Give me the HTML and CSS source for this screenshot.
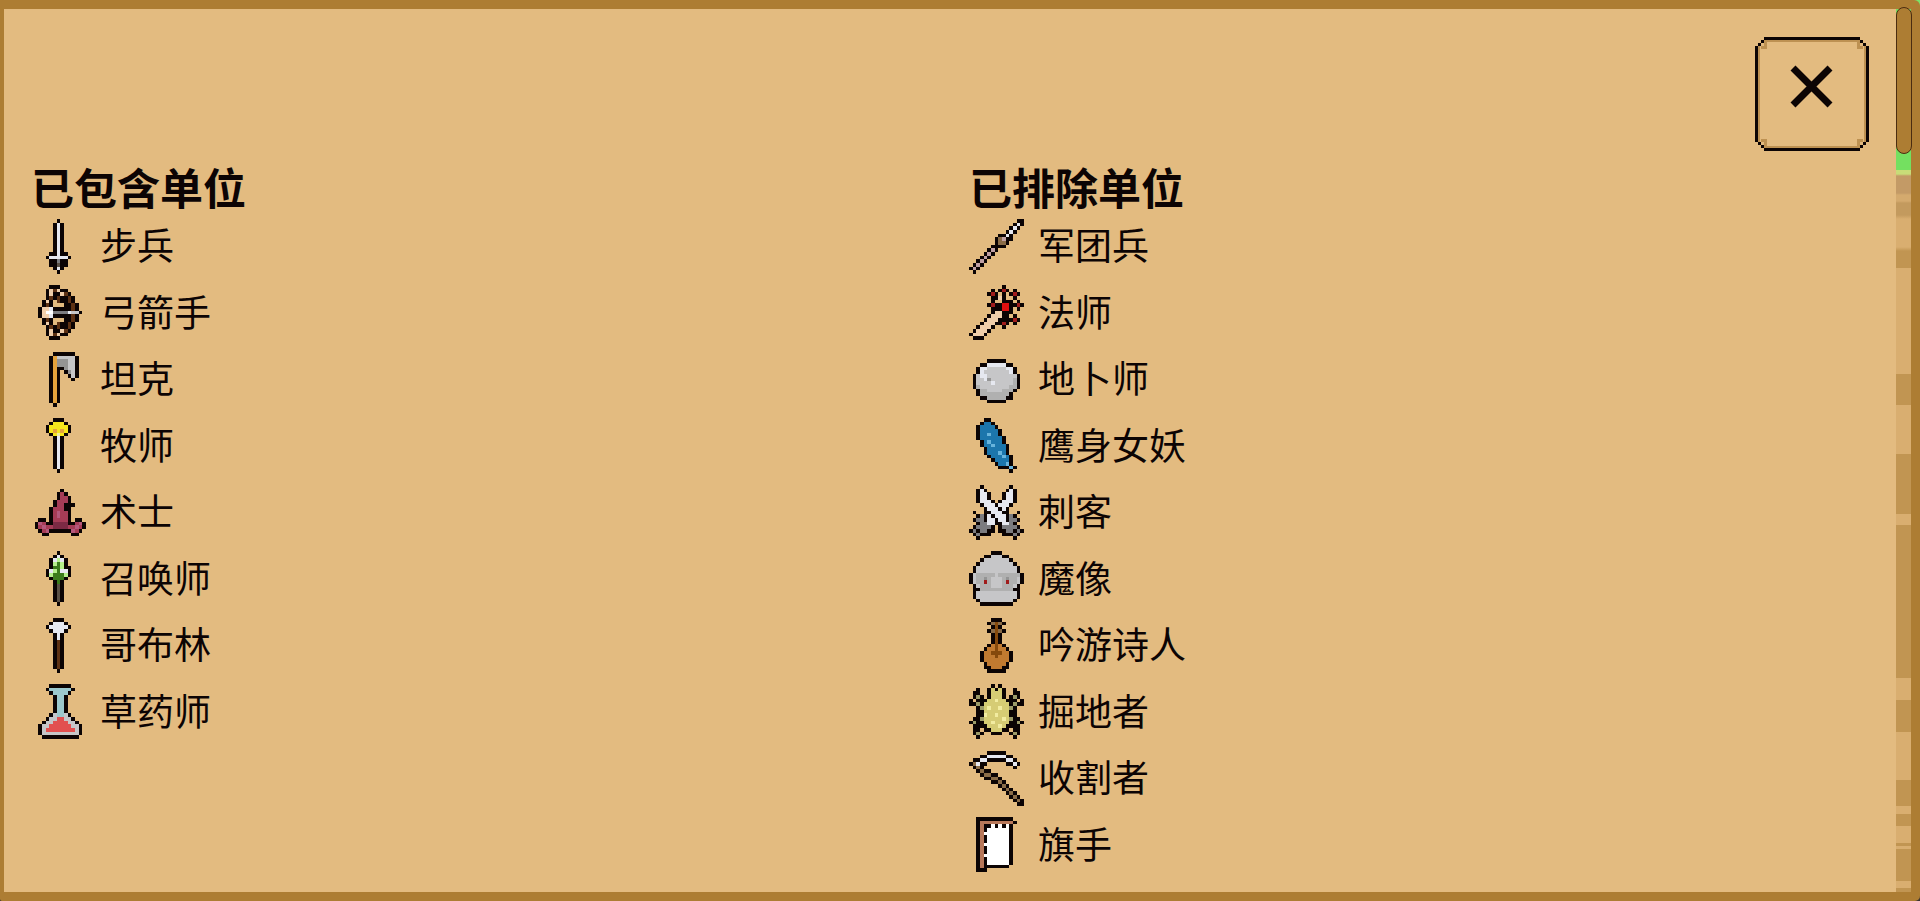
FILE: index.html
```
<!DOCTYPE html>
<html lang="zh-CN">
<head>
    <meta charset="UTF-8">
    <meta name="viewport" content="width=device-width, initial-scale=1.0">
    <title>单位</title>
    <link rel="stylesheet" href="styles.css">
</head>
<body>
    <div class="panel">
        <main class="panel-content">
            <div class="panel-header">
                <button type="button" class="close-btn" aria-label="关闭">
                    <svg class="close-frame" viewBox="0 0 114 114" aria-hidden="true">
                        <path class="frame-shade" d="M9 3h96v2H9zM9 109h96v2H9zM3 9h2v96H3zM109 9h2v96h-2zM9 5h3v4H9zM6 9h6v3H6zM102 5h3v4h-3zM102 9h6v3h-6zM6 102h6v3H6zM9 105h3v4H9zM102 102h6v3h-6zM102 105h3v4h-3z"/>
                        <path class="frame-line" d="M9 0h96v3H9zM9 111h96v3H9zM0 9h3v96H0zM111 9h3v96h-3zM6 3h3v3H6zM3 6h3v3H3zM105 3h3v3h-3zM108 6h3v3h-3zM3 105h3v3H3zM6 108h3v3H6zM108 105h3v3h-3zM105 108h3v3h-3z"/>
                        <path class="frame-cross" d="M38 31l37 37M75 31L38 68"/>
                    </svg>
                </button>
            </div>

            <div class="unit-columns">
                <section class="unit-group">
                    <h2 class="unit-heading">已包含单位</h2>
                    <ul class="unit-list">
                        <li class="unit"><svg class="unit-icon" data-icon="sword"></svg><span class="unit-name">步兵</span></li>
                        <li class="unit"><svg class="unit-icon" data-icon="bow"></svg><span class="unit-name">弓箭手</span></li>
                        <li class="unit"><svg class="unit-icon" data-icon="axe"></svg><span class="unit-name">坦克</span></li>
                        <li class="unit"><svg class="unit-icon" data-icon="wand"></svg><span class="unit-name">牧师</span></li>
                        <li class="unit"><svg class="unit-icon" data-icon="hat"></svg><span class="unit-name">术士</span></li>
                        <li class="unit"><svg class="unit-icon" data-icon="sprout"></svg><span class="unit-name">召唤师</span></li>
                        <li class="unit"><svg class="unit-icon" data-icon="club"></svg><span class="unit-name">哥布林</span></li>
                        <li class="unit"><svg class="unit-icon" data-icon="flask"></svg><span class="unit-name">草药师</span></li>
                    </ul>
                </section>

                <section class="unit-group">
                    <h2 class="unit-heading">已排除单位</h2>
                    <ul class="unit-list">
                        <li class="unit"><svg class="unit-icon" data-icon="spear"></svg><span class="unit-name">军团兵</span></li>
                        <li class="unit"><svg class="unit-icon" data-icon="staff"></svg><span class="unit-name">法师</span></li>
                        <li class="unit"><svg class="unit-icon" data-icon="stone"></svg><span class="unit-name">地卜师</span></li>
                        <li class="unit"><svg class="unit-icon" data-icon="feather"></svg><span class="unit-name">鹰身女妖</span></li>
                        <li class="unit"><svg class="unit-icon" data-icon="daggers"></svg><span class="unit-name">刺客</span></li>
                        <li class="unit"><svg class="unit-icon" data-icon="golem"></svg><span class="unit-name">魔像</span></li>
                        <li class="unit"><svg class="unit-icon" data-icon="lute"></svg><span class="unit-name">吟游诗人</span></li>
                        <li class="unit"><svg class="unit-icon" data-icon="beetle"></svg><span class="unit-name">掘地者</span></li>
                        <li class="unit"><svg class="unit-icon" data-icon="scythe"></svg><span class="unit-name">收割者</span></li>
                        <li class="unit"><svg class="unit-icon" data-icon="flag"></svg><span class="unit-name">旗手</span></li>
                    </ul>
                </section>
            </div>
        </main>

        <div class="scroll-track" aria-hidden="true">
            <div class="scroll-thumb"></div>
        </div>
    </div>

    <script src="icons.js"></script>
</body>
</html>
```
FILE: styles.css
```
* {
    box-sizing: border-box;
}

body {
    margin: 0;
    background: linear-gradient(#7be36a 50%, #3a3432 50%);
    color: #0c0404;
    font-family: "Noto Sans CJK SC", "Noto Sans", sans-serif;
}

.panel {
    display: flex;
    min-height: 100vh;
    border: 9px solid #ad7d33;
    border-left-width: 4px;
    border-radius: 0 6px 5px 2px;
    background: #e3bb80;
}

.panel-content {
    display: flex;
    flex: 1;
    flex-direction: column;
    gap: 12px;
    padding: 28px 27px 14px;
}

.panel-header {
    display: flex;
    justify-content: flex-end;
}

.close-btn {
    width: 114px;
    height: 114px;
    padding: 0;
    border: none;
    background: none;
    cursor: pointer;
}

.close-frame {
    display: block;
    width: 100%;
    height: 100%;
}

.frame-line {
    fill: #0c0404;
}

.frame-shade {
    fill: #bd9152;
}

.frame-cross {
    fill: none;
    stroke: #0c0404;
    stroke-width: 7;
}

.unit-columns {
    display: grid;
    flex: 1;
    grid-template-columns: 1fr 1fr;
    gap: 38px;
}

.unit-group {
    display: flex;
    flex-direction: column;
}

.unit-heading {
    margin: 0;
    padding-bottom: 4px;
    font-size: 43px;
    font-weight: 700;
    line-height: 46px;
}

.unit-list {
    display: grid;
    flex: 1;
    grid-template-rows: repeat(10, 1fr);
    margin: 0;
    padding: 0;
    list-style: none;
}

.unit {
    display: flex;
    align-items: center;
    gap: 14px;
}

.unit-name {
    padding-bottom: 4px;
    font-size: 37px;
    line-height: 50px;
}

.unit-icon {
    flex: none;
    width: 55px;
    height: 55px;
    shape-rendering: crispEdges;
}

.scroll-track {
    width: 15px;
    background: linear-gradient(
        #74e060 0 161px, #c8dc78 161px 165px, #c39a66 167px 184px, #d4aa6e 186px 192px,
        #c39a5e 194px 206px, #d9ae70 210px 238px, #c19552 242px 259px, #d9ae70 259px 365px,
        #c19552 365px 396px, #d9ae70 396px 445px, #c19552 445px 505px, #d9ae70 505px 516px,
        #c19552 516px 669px, #d9ae70 669px 691px, #c19552 691px 723px, #d9ae70 723px 771px,
        #c19552 771px 797px, #d9ae70 797px 805px, #c19552 805px 817px, #d9ae70 817px 834px,
        #c19552 834px 837px, #d9ae70 837px 840px, #c19552 840px 872px, #d9ae70 872px 879px,
        #c19552 879px
    );
}

.scroll-thumb {
    width: 16px;
    height: 147px;
    margin-top: -2px;
    border: 1px solid #4a2c10;
    border-radius: 8px;
    background: #ad7d33;
}
```
FILE: icons.js
```
// one character per pixel, '.' is transparent
const palette = {
    k: '#0c0404', w: '#e6e8f0', a: '#c6c6c8', h: '#949494', g: '#7c7c80',
    s: '#b0b0b0', o: '#e5a23c', y: '#f6e61c', Y: '#d6cc74', W: '#f2eca0',
    q: '#9c9a68', p: '#b4587c', P: '#a63c56', d: '#7c2a44', l: '#b6f08c',
    G: '#3c7c1c', e: '#5a5046', b: '#5e3214', t: '#f0ceaa', R: '#e01010',
    r: '#a01c1c', m: '#e25050', c: '#9cc8cc', B: '#1c76ac', C: '#68b4dc',
    n: '#c17a30', N: '#85490c', f: '#b8785a', u: '#8a6c48', v: '#c0a0a4',
    F: '#ffffff'
};

const icons = {
    sword: [
        '.......k.......', '......kwk......', '......kwk......', '......kwk......', '......kwk......',
        '......kwk......', '......kwk......', '......kwk......', '......kwk......', '.....kkwkk.....',
        '....kwwwwwk....', '.....kkgkk.....', '.....kkekk.....', '......kwk......', '.......k.......'
    ],
    bow: [
        '.....kkk.......', '....ktbtkk.....', '....ktkktbk....', '....kbkbkkbk...', '...ktk.bkkbk...',
        '...kbk...kkbk..', '..kttwkkkkkbk..', '..ktFFggggwaak.', '..kttwkkkkkbk..', '...kbk...kkbk..',
        '...ktk.bkkbk...', '....kbkbkkbk...', '....ktkktbk....', '....ktbtkk.....', '.....kkk.......'
    ],
    axe: [
        '......kkkkkk...', '.....koaaaaak..', '.....kohhhaak..', '.....kohhhaak..', '.....kokkhaak..',
        '.....kok.khak..', '.....kok..kak..', '.....kok...k...', '.....kok.......', '.....kok.......',
        '.....kok.......', '.....kok.......', '.....kok.......', '.....kok.......', '......k........'
    ],
    wand: [
        '......kkk......', '.....kyyyk.....', '....kyyyyyk....', '....kyoyoyk....', '.....kyWyk.....',
        '......kwk......', '......kwk......', '......kwk......', '......kwk......', '......kwk......',
        '......kwk......', '......kwk......', '......kwk......', '......kwk......', '.......k.......'
    ],
    hat: [
        '...............', '........k......', '.......kPk.....', '.......kPPk....', '......kPPPk....',
        '......kPPkkk...', '.....kPPPkk....', '.....kPpPPk....', '.....kPpPPk....', '..kk.kPPPPk.kk.',
        '.kpPkkddddkkPpk', '.kPpPPddddPPpPk', '..kPpkkkkkkpPk.', '...kk......kk..', '...............'
    ],
    sprout: [
        '.......k.......', '......kwk......', '.....kwlwk.....', '.....klGlk.....', '.....kGGlkk....',
        '....kwlGwwk....', '....klGGGlk....', '.....kGGGk.....', '......kGk......', '......kek......',
        '......kek......', '......kek......', '......kek......', '......kek......', '.......k.......'
    ],
    club: [
        '......kkk......', '.....kwwwk.....', '....kwwwwwk....', '.....kwwwk.....', '......kwk......',
        '......kwk......', '......kbk......', '......kbk......', '......kbk......', '......kbk......',
        '......kbk......', '......kbk......', '......kbk......', '......kbk......', '.......k.......'
    ],
    flask: [
        '.....kkkkkk....', '....kcccccck...', '.....kcccck....', '......kcck.....', '......kcck.....',
        '......kcck.....', '......kcck.....', '......kcck.....', '.....kaccak....', '....kaammaak...',
        '...kaammmmaak..', '..kaammmmmmaak.', '..kammmmmmmmak.', '..kaaaaaaaaaak.', '...kkkkkkkkkk..'
    ],
    spear: [
        '.............kk', '............kwk', '...........kwk.', '..........kwk..', '........kkwk...',
        '.......kuvkk...', '.......kuuk....', '......kkkk.....', '.....kvk.......', '....kvk........',
        '...kvk.........', '..kvk..........', '.kvk...........', 'kvk............', '.k.............'
    ],
    staff: [
        '.........k.....', '......k.krk.k..', '.....krk.k.krk.', '......kktk..k..', '......k..kkk.k.',
        '.....krkkRRkkrk', '......kkkRRk.k.', '......kttkkk...', '.....ktttkk.k..', '....ktttkkkkrk.',
        '...ktttkkrk.k..', '..ktttk..k.....', '.ktttk.........', 'ktttk..........', '.kkk...........'
    ],
    stone: [
        '...............', '...............', '.....kkkkk.....', '...kkwwwwwkk...', '..kwwaaaaawwk..',
        '..kwaaaaaaawk..', '.kawwaaaaaaaak.', '.kaawhaaaaaask.', '.kaaaawaaaaask.', '.ksaaaaaaaassk.',
        '..kssaaaasssk..', '..kssssssssk...', '...kkssssskk...', '.....kkkkk.....', '...............'
    ],
    feather: [
        '....kk.........', '...kBBk........', '..kBBBBk.......', '..kBBBBBk......', '..kBBCBBk......',
        '..kBBBBBBk.....', '...kBCBBBk.....', '...kBBCBBBk....', '....kBBBBBk....', '....kBBBCBk....',
        '.....kBBBCBk...', '......kBBBBk...', '.......kBBCk...', '........kkkCk..', '...........k...'
    ],
    daggers: [
        '...k.......k...', '..kwk.....kwk..', '..kwwk...kwwk..', '..kwwk...kwwk..', '..kwwwk.kwwwk..',
        '...kwwwkwwwk...', '....kwwwkwk....', '.k..kkwwwkk..k.', '..kgkwkwwwkgk..', '.kggkwwkwwkggk.',
        '..kggwwkkwwgk..', '.kggggk.kggggk.', 'kgkggkk.kkggkgk', '.kgkkk...kkkgk.', '..k.........k..'
    ],
    golem: [
        '......kkk......', '....kkaaakk....', '...kaaaaaaak...', '..kaaaaaaaaak..', '.kaaaaaaaaaaak.',
        '.kaaaaaaaaaaak.', 'kasssssassssssk', 'kasshsaaashssak', 'kassrsaaasrssak', '.kasssaaasssak.',
        '.kkssssssssskk.', '.kaaaaaaaaaaak.', '.kaaaaaaaaaaak.', '..kaaaaaaaaak..', '...kkkkkkkkk...'
    ],
    lute: [
        '......kkk......', '.....kuNuk.....', '......kNk......', '.....kuNuk.....', '......kNk......',
        '......kNk......', '......kNk......', '.....knNnk.....', '....knnNnnk....', '...knnNNNnnk...',
        '...knnnNnnnk...', '...knnnnnnnk...', '....knnnnnk....', '....kknnnkk....', '.....kkkkk.....'
    ],
    beetle: [
        '......k.k......', '..k..kYkYk..k..', '.kk..kYYYk..kk.', '.kqk.kYYYk.kqk.', 'k.kkkYYWYYkkk.k',
        'kkqkYYYYYYYkqkk', '..kqYWYYWYYqk..', '..kkYYYYYYYkk..', '..kkWYYWYYYkk..', '.kkqYYYYYWYqkk.',
        'kqkkYYWYYYYkkqk', '.kkkkYYYWYkkkk.', '.kk.kkYYYkk.kk.', '.kqk..kkk..kqk.', '..k.........k..'
    ],
    scythe: [
        '.....kkkkk.....', '...kkwwwwwkk...', '.kkwwkkkkkwwk..', 'kuwkk.....kkwk.', '.kuk........k..',
        '..kukk.........', '...kuukk.......', '....kkuuk......', '......kkuk.....', '........kuk....',
        '.........kuk...', '..........kuk..', '...........kuk.', '............kuk', '.............kk'
    ],
    flag: [
        '..kkkkkkkkkk...', '..kfffffffffk..', '..kfkkFkFkFk...', '..kfkFFFFFFk...', '..kfFFFFFFFk...',
        '..kfkFFFFFFk...', '..kfkFFFFFFk...', '..kfFFFFFFFk...', '..kfkFFFFFFk...', '..kfkFFFFFFk...',
        '..kfFFFFFFFk...', '..kfkFFFFFFk...', '..kfkFFFFFFk...', '..kfkkkkkkk....', '..kkk..........'
    ]
};

document.querySelectorAll('.unit-icon').forEach(function(svg) {
    const paths = {};
    icons[svg.dataset.icon].forEach(function(row, y) {
        [...row].forEach(function(key, x) {
            if (key === '.') return;
            paths[key] = (paths[key] || '') + `M${x} ${y}h1v1h-1z`;
        });
    });
    svg.setAttribute('viewBox', '0 0 15 15');
    svg.setAttribute('aria-hidden', 'true');
    svg.innerHTML = Object.keys(paths).map(key => `<path fill="${palette[key]}" d="${paths[key]}"/>`).join('');
});
```
